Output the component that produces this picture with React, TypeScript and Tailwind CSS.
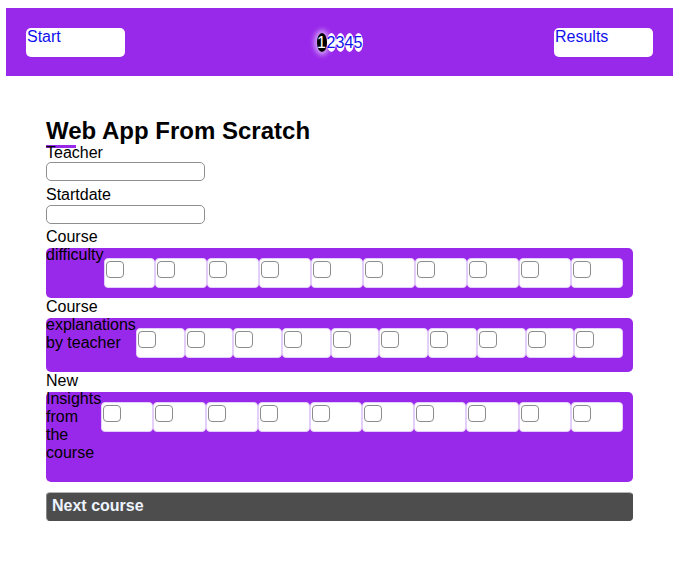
const questions = [
  "Course difficulty",
  "Course explanations by teacher",
  "New Insights from the course",
];

const steps = ["1", "2", "3", "4", "5"];

const App = () => {
  return (
    <div className="min-h-screen bg-white font-['Liberation_Sans',Arial,sans-serif] text-black">
      {/* Top bar */}
      <header className="ml-[6px] mr-[8px] mt-[8px] h-[68px] bg-[#9929ea] flex items-center justify-between px-[20px]">
        <a href="#" className="block w-[99px] h-[29px] bg-white rounded-[5px] text-[16px] leading-[1.15] text-[#1010ee] px-[1px]">
          Start
        </a>
        <div className="flex items-center text-[16px] leading-[19px]">
          {steps.map((s, i) => (
            <span
              key={s}
              className={
                i === 0
                  ? "inline-block w-[10px] text-center rounded-[50%] bg-black text-white shadow-[0_0_5px_3px_rgba(255,255,255,0.55)]"
                  : "inline-block w-[9px] text-center rounded-[50%] bg-white text-[#1010ee]"
              }
            >
              {s}
            </span>
          ))}
        </div>
        <a href="#" className="block w-[99px] h-[29px] bg-white rounded-[5px] text-[16px] leading-[1.15] text-[#1010ee] px-[1px]">
          Results
        </a>
      </header>

      <main className="ml-[46px] w-[587px] mt-[42px] pb-[40px] flex flex-col">
        {/* Title */}
        <h1 className="text-[24px] font-bold leading-[26px]">Web App From Scratch</h1>
        <div className="h-[3px] w-[30px] bg-[#9929ea] mt-[1px] -mb-[4px]" />

        <label className="block text-[16px] leading-[1.15]">Teacher</label>
        <input className="block w-[159px] h-[19px] border border-[#8f8f8f] rounded-[5px] mb-[5px]" />
        <label className="block text-[16px] leading-[1.15]">Startdate</label>
        <input className="block w-[159px] h-[19px] border border-[#8f8f8f] rounded-[5px] mb-[4px]" />

        {/* Rating rows */}
        {questions.map((q) => (
          <div key={q} className="mt-[20px] flex items-start bg-[#9929ea] rounded-[5px] pr-[10px]">
            <span className="relative -top-[20px] w-min text-[16px] leading-[18px]">{q}</span>
            <div className="flex-1 flex py-[10px]">
              {Array.from({ length: 10 }).map((_, i) => (
                <div key={i} className="flex-1 h-[30px] bg-white border border-[#e4cffb] rounded-[4px]">
                  <span className="block w-[18px] h-[17px] mt-[2px] ml-[1px] rounded-[4px] border border-[#8c8c8c]" />
                </div>
              ))}
            </div>
          </div>
        ))}

        {/* Next */}
        <button className="mt-[10px] w-full h-[29px] bg-[#4d4d4d] rounded-[4px] border border-t-[#b5b5b5] border-l-[#8a8a8a] border-r-[#4d4d4d] border-b-[#4d4d4d] text-left pl-[5px] text-[16px] font-bold text-[#eef5ff]">
          Next course
        </button>
      </main>
    </div>
  );
};

export default App;
